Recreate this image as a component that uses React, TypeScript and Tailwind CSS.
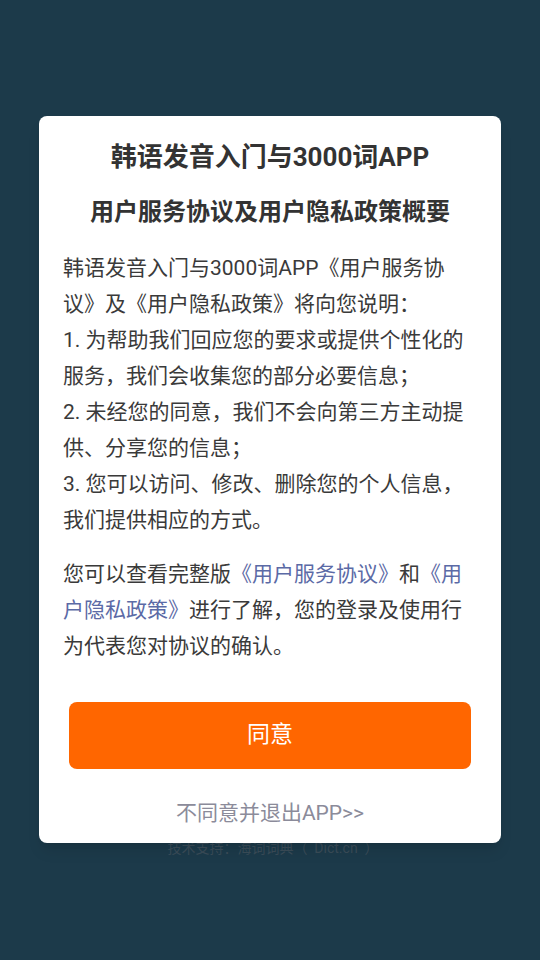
import React from "react";

const font = { fontFamily: 'Roboto, "Noto Sans CJK SC", sans-serif' };

export default function App() {
  return (
    <div
      className="min-h-[960px] w-full bg-[#1c3a4a] flex flex-col items-center pt-[116px] [text-spacing-trim:space-all]"
      style={font}
    >
      {/* Dialog card */}
      <div className="relative z-10 w-[462px] bg-white rounded-[8px] shadow-lg px-6 pt-[22px] pb-[15px]">
        <h1 className="text-center text-[26px] leading-[39px] font-bold text-[#333333]">
          韩语发音入门与3000词APP
        </h1>
        <h2 className="mt-[17px] text-center text-[24px] leading-[36px] font-bold text-[#333333]">
          用户服务协议及用户隐私政策概要
        </h2>

        <p className="mt-[20px] text-[21px] leading-[36px] text-[#3a3a3a]">
          韩语发音入门与3000词APP《用户服务协议》及《用户隐私政策》将向您说明：
          <br />
          1. 为帮助我们回应您的要求或提供个性化的服务，我们会收集您的部分必要信息；
          <br />
          2. 未经您的同意，我们不会向第三方主动提供、分享您的信息；
          <br />
          3. 您可以访问、修改、删除您的个人信息，我们提供相应的方式。
        </p>

        <p className="mt-[18px] text-[21px] leading-[36px] text-[#3a3a3a]">
          您可以查看完整版
          <span className="text-[#5b6aa6]">《用户服务协议》</span>和
          <span className="text-[#5b6aa6]">《用户隐私政策》</span>
          进行了解，您的登录及使用行为代表您对协议的确认。
        </p>

        <button className="mt-[38px] mx-auto block w-[402px] h-[67px] rounded-[8px] bg-[#ff6600] text-white text-[23px]">
          同意
        </button>

        <p className="mt-[29px] text-center text-[21px] leading-[30px] text-[#8b8b9a]">
          不同意并退出APP&gt;&gt;
        </p>
      </div>

      {/* Footer text partly under the card */}
      <p className="-mt-[2px] ml-[6px] text-[14px] leading-[14px] text-[#3a4c58] whitespace-pre">
        技术支持：海词词典（  Dict.cn  ）
      </p>
    </div>
  );
}
